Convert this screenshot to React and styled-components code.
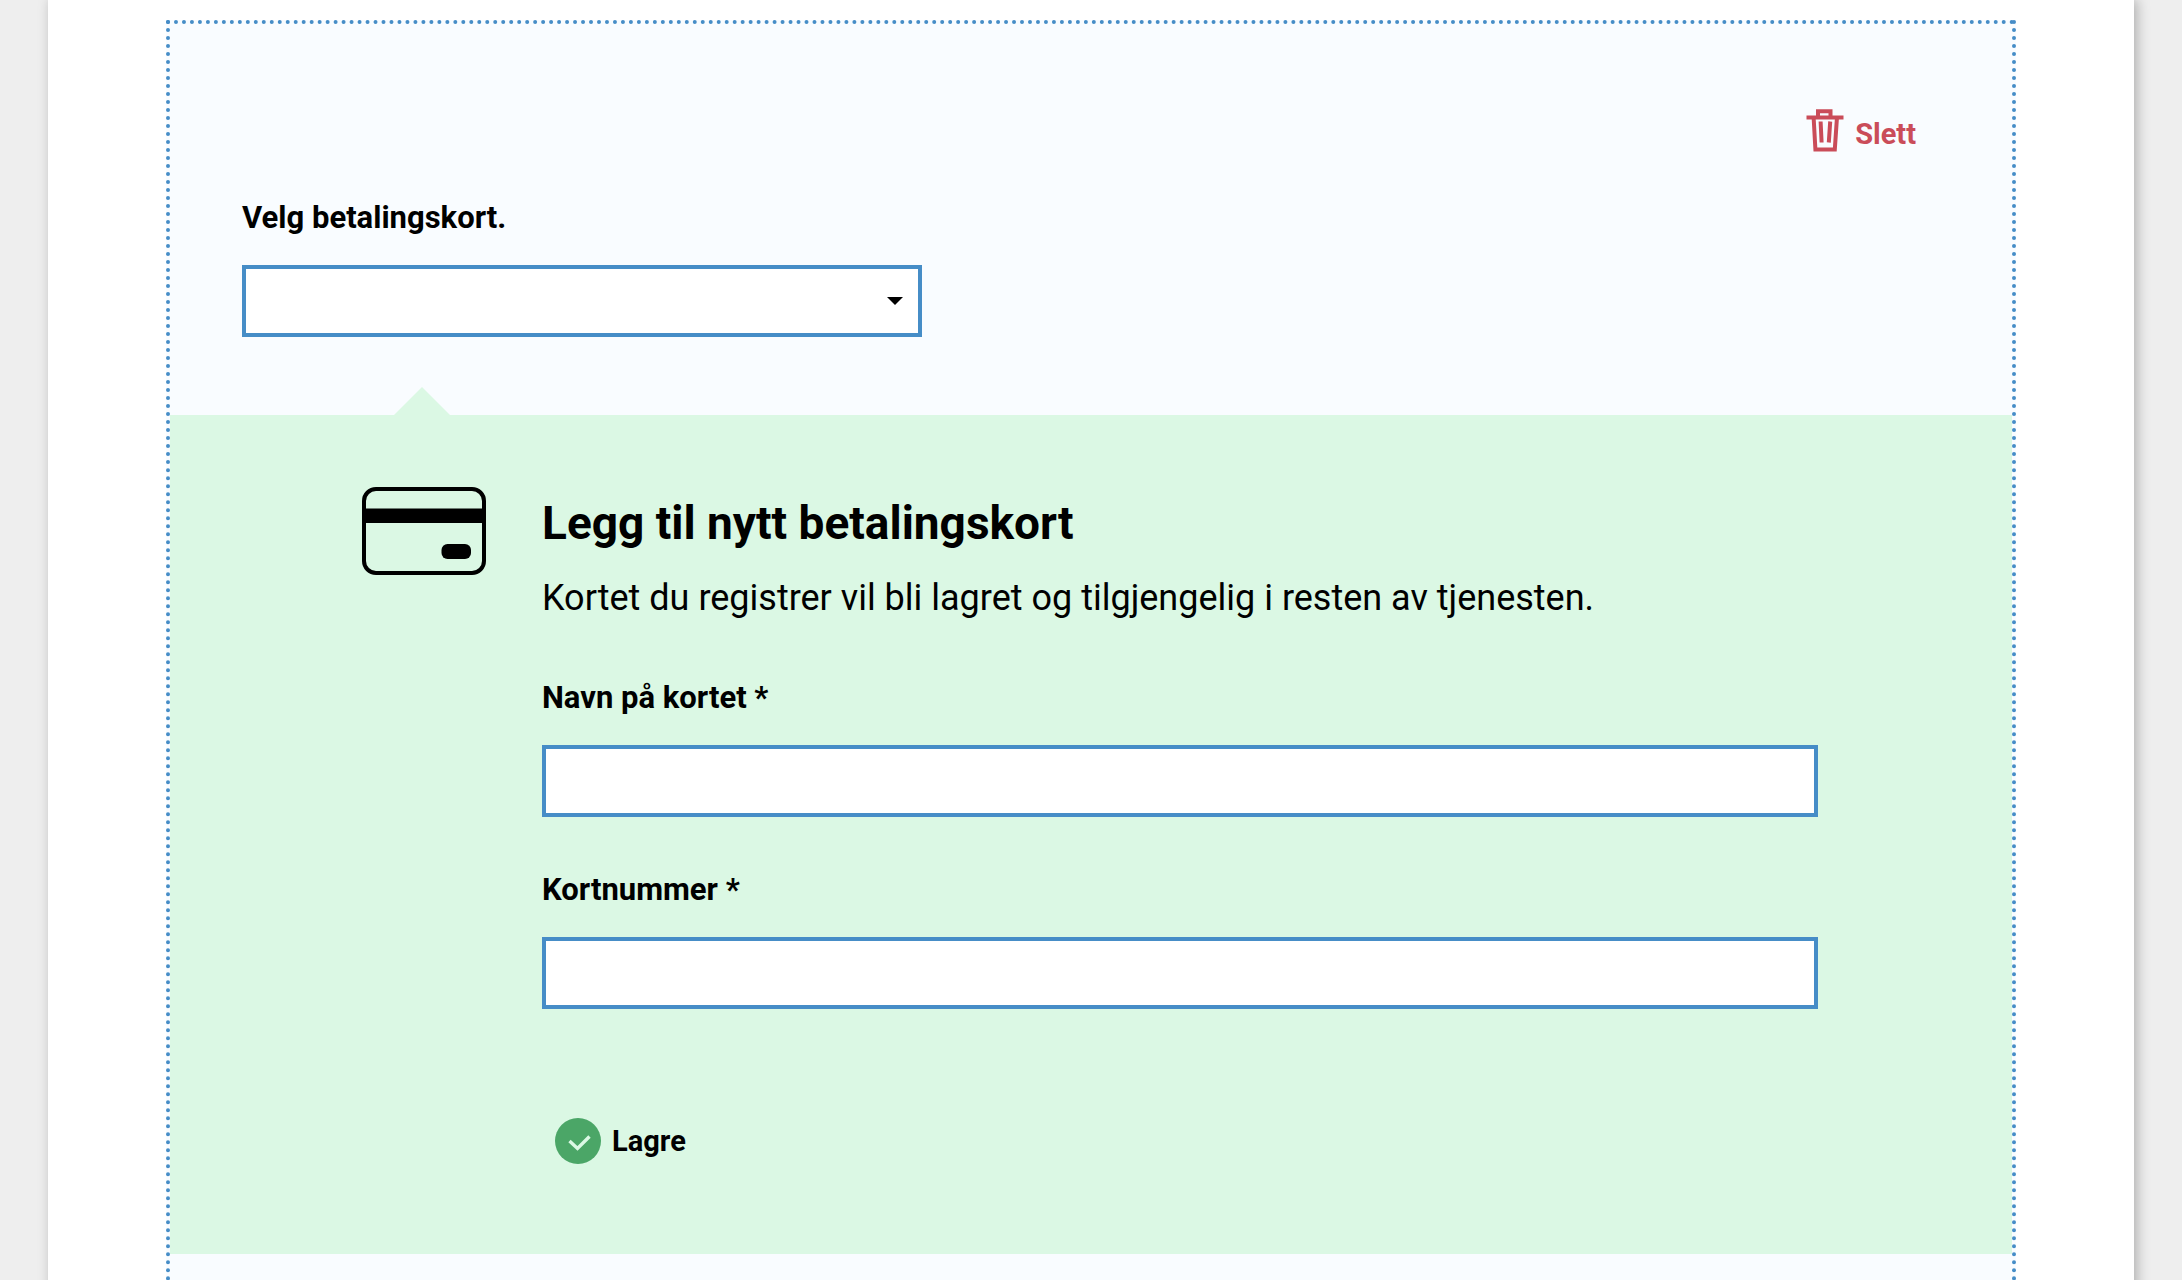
import React from "react";
import styled, { createGlobalStyle } from "styled-components";

const GlobalStyle = createGlobalStyle`
  *, *::before, *::after { box-sizing: border-box; }
  body {
    margin: 0;
    background: #eee;
    color: #000;
    font-family: Roboto, "Liberation Sans", sans-serif;
  }
  button, input, select { font: inherit; color: inherit; }
`;

const Viewport = styled.div`
  height: 100vh;
  padding: 0 48px;
  overflow: hidden;
`;

const Page = styled.main`
  min-height: 100%;
  padding: 20px 118px 72px;
  background: #fff;
  box-shadow: 3px 0 12px rgba(0, 0, 0, 0.27);
`;

const Panel = styled.section`
  padding: 72px 0;
  border: 4px dotted #468dc7;
  background: #f9fcff;
`;

const Toolbar = styled.div`
  display: flex;
  justify-content: flex-end;
  padding: 0 72px;
  margin-bottom: 34px;
`;

const ActionButton = styled.button`
  display: flex;
  align-items: ${(p) => p.$align || "center"};
  gap: 11px;
  padding: ${(p) => p.$padding};
  border: 0;
  background: none;
  color: ${(p) => p.$color};
  font-size: 29px;
  font-weight: 700;
  line-height: 36px;
  cursor: pointer;

  svg { display: block; flex: none; }
`;

const Chooser = styled.div`
  max-width: 824px;
  padding: 0 72px;
  margin-bottom: 78px;
`;

const Label = styled.label`
  display: block;
  margin-bottom: 27px;
  font-size: 31px;
  font-weight: 700;
  line-height: 40px;
`;

const SelectWrap = styled.div`
  display: grid;
  align-items: center;

  > * { grid-area: 1 / 1; }
  > svg {
    justify-self: end;
    margin-right: 19px;
    pointer-events: none;
  }
`;

const Select = styled.select`
  appearance: none;
  width: 100%;
  height: 72px;
  padding: 0 48px 0 16px;
  border: 4px solid #468dc7;
  border-radius: 0;
  background: #fff;
`;

const Input = styled.input`
  display: block;
  width: 100%;
  height: 72px;
  padding: 0 16px;
  border: 4px solid #468dc7;
  border-radius: 0;
  background: #fff;
`;

const NewCard = styled.form`
  position: relative;
  display: flex;
  align-items: flex-start;
  gap: 56px;
  padding: 72px 194px 78px 192px;
  background: #dbf8e4;

  &::before {
    content: "";
    position: absolute;
    top: -28px;
    left: 224px;
    width: 56px;
    height: 28px;
    background: inherit;
    clip-path: polygon(50% 0, 100% 100%, 0 100%);
  }

  > svg { flex: none; }
`;

const CardBody = styled.div`
  flex: 1;
  padding-top: 8px;
`;

const Heading = styled.h2`
  margin: 0 0 23px;
  font-size: 46px;
  font-weight: 700;
  line-height: 56px;
`;

const Intro = styled.p`
  margin: 0 0 56px;
  font-size: 36px;
  line-height: 48px;
`;

const Field = styled.div`
  & + & { margin-top: 53px; }
`;

const Actions = styled.div`
  display: flex;
  margin-top: 97px;
`;

const TrashIcon = () => (
  <svg width="38" height="44" viewBox="0 0 38 44" fill="none" stroke="currentColor" aria-hidden="true">
    <path d="M0.5 9.5H37.5" strokeWidth="4" />
    <path d="M12 9V3.2H24.5V9" strokeWidth="4" />
    <path d="M7.6 9L9.4 41.4H28.8L31 9" strokeWidth="4" />
    <path d="M14.6 13.5L15.6 34.5M24.2 13.5L22.8 34.5" strokeWidth="4" />
  </svg>
);

const CardIcon = () => (
  <svg width="124" height="88" viewBox="0 0 124 88" aria-hidden="true">
    <rect x="2" y="2" width="120" height="84" rx="12" fill="none" stroke="#000" strokeWidth="4" />
    <path d="M2 21.5H122V36H2Z" />
    <rect x="79.5" y="57" width="29.5" height="15" rx="6" />
  </svg>
);

const CheckIcon = () => (
  <svg width="46" height="46" viewBox="0 0 46 46" aria-hidden="true">
    <circle cx="23" cy="23" r="23" fill="#4ba667" />
    <path d="M14.5 23L22.5 30.5L34.5 18.5" fill="none" stroke="#dbf8e4" strokeWidth="3.4" />
  </svg>
);

const Caret = () => (
  <svg width="16" height="8" viewBox="0 0 16 8" aria-hidden="true">
    <path d="M0 0H16L8 8Z" />
  </svg>
);

export default function App() {
  return (
    <>
      <GlobalStyle />
      <Viewport>
        <Page>
          <Panel>
            <Toolbar>
              <ActionButton type="button" $color="#ca4c59" $align="flex-end" $padding="12px 24px">
                <TrashIcon />
                Slett
              </ActionButton>
            </Toolbar>
            <Chooser>
              <Label htmlFor="card">Velg betalingskort.</Label>
              <SelectWrap>
                <Select id="card" defaultValue="">
                  <option value="" />
                </Select>
                <Caret />
              </SelectWrap>
            </Chooser>
            <NewCard onSubmit={(e) => e.preventDefault()}>
              <CardIcon />
              <CardBody>
                <Heading>Legg til nytt betalingskort</Heading>
                <Intro>Kortet du registrer vil bli lagret og tilgjengelig i resten av tjenesten.</Intro>
                <Field>
                  <Label htmlFor="name">Navn på kortet *</Label>
                  <Input id="name" type="text" />
                </Field>
                <Field>
                  <Label htmlFor="number">Kortnummer *</Label>
                  <Input id="number" type="text" />
                </Field>
                <Actions>
                  <ActionButton type="submit" $color="#000" $padding="12px 13px">
                    <CheckIcon />
                    Lagre
                  </ActionButton>
                </Actions>
              </CardBody>
            </NewCard>
          </Panel>
        </Page>
      </Viewport>
    </>
  );
}
